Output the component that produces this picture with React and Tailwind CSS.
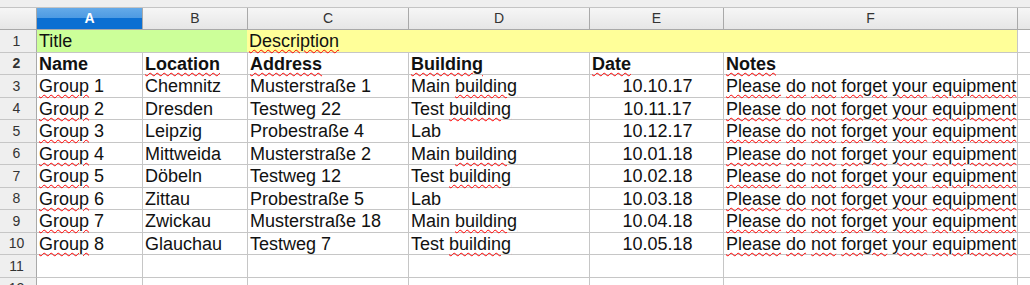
import React from "react";

const rows = [
  ["Group 1", "Chemnitz", "Musterstraße 1", "Main building", "10.10.17"],
  ["Group 2", "Dresden", "Testweg 22", "Test building", "10.11.17"],
  ["Group 3", "Leipzig", "Probestraße 4", "Lab", "10.12.17"],
  ["Group 4", "Mittweida", "Musterstraße 2", "Main building", "10.01.18"],
  ["Group 5", "Döbeln", "Testweg 12", "Test building", "10.02.18"],
  ["Group 6", "Zittau", "Probestraße 5", "Lab", "10.03.18"],
  ["Group 7", "Zwickau", "Musterstraße 18", "Main building", "10.04.18"],
  ["Group 8", "Glauchau", "Testweg 7", "Test building", "10.05.18"],
];

// red spell-check squiggle
const Sq = ({ children }) => (
  <span className="underline decoration-wavy decoration-[#ff0000] decoration-1 underline-offset-[2px]">
    {children}
  </span>
);

const RowHead = ({ n }) => (
  <div className="w-[37px] shrink-0 flex items-center justify-center pr-[3px] bg-[#efefef] border-r border-r-[#a9a9a9] border-b border-b-[#c6c6c6] text-[14px] text-[#333]">
    {n}
  </div>
);

const cell = "shrink-0 border-r border-b border-[#c6c6c6] pl-[2px] whitespace-nowrap leading-[22px] text-[18px] text-[#111]";

const Building = ({ value }) => {
  if (value === "Lab") return value;
  const [first] = value.split(" ");
  return (
    <>
      {first} <Sq>building</Sq>
    </>
  );
};

const Notes = () => (
  <>
    <Sq>Please</Sq> <Sq>do</Sq> <Sq>not</Sq> <Sq>forget</Sq> <Sq>your</Sq> <Sq>equipment</Sq>
  </>
);

export default function App() {
  const letters = ["A", "B", "C", "D", "E", "F"];
  const widths = ["w-[106px]", "w-[105px]", "w-[161px]", "w-[181px]", "w-[134px]", "w-[294px]"];

  return (
    <div className="w-[1030px] h-[285px] overflow-hidden bg-white font-['Liberation_Sans',Arial,sans-serif]">
      {/* toolbar strip */}
      <div className="h-[7px] bg-[#efefef]" />

      {/* column headers */}
      <div className="flex h-[23px] border-t border-t-[#c4c4c4] border-b border-b-[#a9a9a9] text-[14px] text-[#333]">
        <div className="w-[37px] shrink-0 bg-[linear-gradient(#f6f6f6,#e6e6e6)] border-r border-r-[#a9a9a9]" />
        {letters.map((l, i) => (
          <div
            key={l}
            className={`${widths[i]} shrink-0 flex items-center justify-center border-r border-r-[#a9a9a9] ${
              i === 0
                ? "bg-[linear-gradient(#64aae9_0%,#4d9ae2_48%,#0b6fd2_50%,#0b6fd2_100%)] text-white font-bold"
                : "bg-[linear-gradient(#f6f6f6,#e6e6e6)]"
            }`}
          >
            {l}
          </div>
        ))}
        <div className="flex-1 bg-[linear-gradient(#f6f6f6,#e6e6e6)]" />
      </div>

      {/* row 1 */}
      <div className="flex h-[23px]">
        <RowHead n={1} />
        <div className="w-[210px] shrink-0 bg-[#ccff99] border-b border-[#c6c6c6] pl-[2px] leading-[22px] text-[18px] text-[#111]">
          Title
        </div>
        <div className="w-[771px] shrink-0 bg-[#ffff99] border-r border-b border-[#c6c6c6] pl-[2px] leading-[22px] text-[18px] text-[#111]">
          <Sq>Description</Sq>
        </div>
        <div className="flex-1 border-b border-[#c6c6c6]" />
      </div>

      {/* row 2 */}
      <div className="flex h-[22px] font-bold">
        <RowHead n={2} />
        <div className={`${cell} w-[106px]`}>Name</div>
        <div className={`${cell} w-[105px]`}><Sq>Location</Sq></div>
        <div className={`${cell} w-[161px]`}><Sq>Address</Sq></div>
        <div className={`${cell} w-[181px]`}><Sq>Building</Sq></div>
        <div className={`${cell} w-[134px]`}><Sq>Date</Sq></div>
        <div className={`${cell} w-[294px]`}><Sq>Notes</Sq></div>
        <div className="flex-1 border-b border-[#c6c6c6]" />
      </div>

      {rows.map((r, i) => (
        <div key={r[0]} className={`flex ${i % 2 === 0 ? "h-[23px]" : "h-[22px]"}`}>
          <RowHead n={i + 3} />
          <div className={`${cell} w-[106px]`}>
            <Sq>Group</Sq> {r[0].split(" ")[1]}
          </div>
          <div className={`${cell} w-[105px]`}>{r[1]}</div>
          <div className={`${cell} w-[161px]`}>{r[2]}</div>
          <div className={`${cell} w-[181px]`}>
            <Building value={r[3]} />
          </div>
          <div className={`${cell} w-[134px] text-center`}>{r[4]}</div>
          <div className={`${cell} w-[294px]`}>
            <Notes />
          </div>
          <div className="flex-1 border-b border-[#c6c6c6]" />
        </div>
      ))}

      {/* empty rows */}
      {[11, 12].map((n) => (
        <div key={n} className={`flex ${n === 11 ? "h-[23px]" : "h-[22px]"}`}>
          <RowHead n={n} />
          {widths.map((w) => (
            <div key={w} className={`${cell} ${w}`} />
          ))}
          <div className="flex-1 border-b border-[#c6c6c6]" />
        </div>
      ))}
    </div>
  );
}
